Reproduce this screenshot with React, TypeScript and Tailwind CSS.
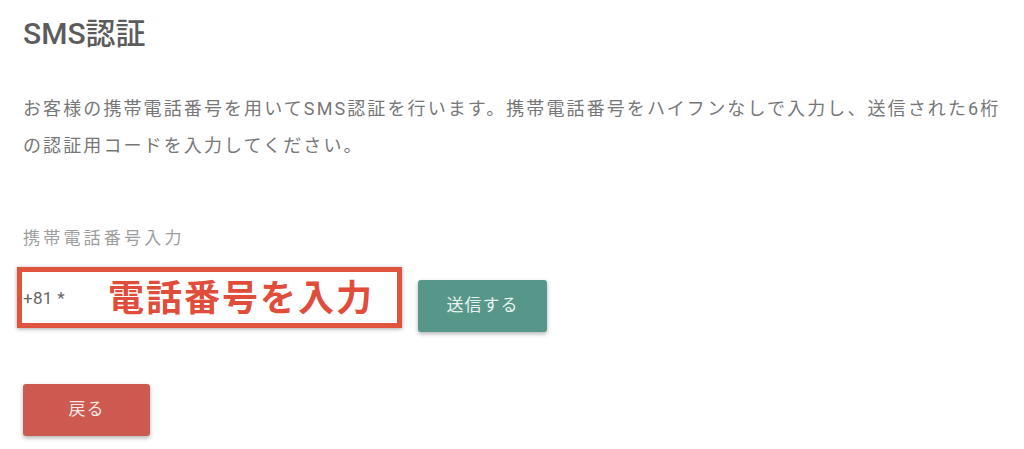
const App = () => {
  return (
    <div className="min-h-screen w-full bg-white pl-[23px] pr-[4px] font-['Roboto','Noto_Sans_CJK_JP',sans-serif]">
      <h1 className="pt-[16px] text-[30px] leading-[36px] font-medium text-[#5c5c5c]">SMS認証</h1>

      <p className="mt-[38px] text-[18px] leading-[37px] tracking-[2.1px] text-[#777777]">
        お客様の携帯電話番号を用いてSMS認証を行います。携帯電話番号をハイフンなしで入力し、送信された6桁
        <br />
        の認証用コードを入力してください。
      </p>

      <div className="mt-[62px] text-[17px] leading-[24px] tracking-[3.2px] text-[#9e9e9e]">携帯電話番号入力</div>

      <div className="mt-[17px] flex items-start gap-[16px]">
        <div className="-ml-[6px] flex h-[61px] w-[385px] items-center border-[5px] border-[#e0533c] bg-white pl-[1px] pt-[3px] shadow-[0_1px_4px_rgba(0,0,0,0.35)]">
          <span className="w-[85px] text-[17px] tracking-[0.3px] text-[#666666]">+81 *</span>
          <span className="text-[36px] leading-none font-bold tracking-[2px] text-[#e04d3a]">電話番号を入力</span>
        </div>
        <button className="mt-[13px] h-[52px] w-[129px] rounded-[3px] bg-[#56978a] text-[17px] tracking-[1px] text-[#e9f2f0] shadow-[0_2px_4px_rgba(0,0,0,0.3)]">
          送信する
        </button>
      </div>

      <button className="mt-[52px] h-[52px] w-[127px] rounded-[3px] bg-[#cc5a50] text-[17px] tracking-[1px] text-[#f6e6e4] shadow-[0_2px_4px_rgba(0,0,0,0.3)]">
        戻る
      </button>
    </div>
  )
}

export default App
